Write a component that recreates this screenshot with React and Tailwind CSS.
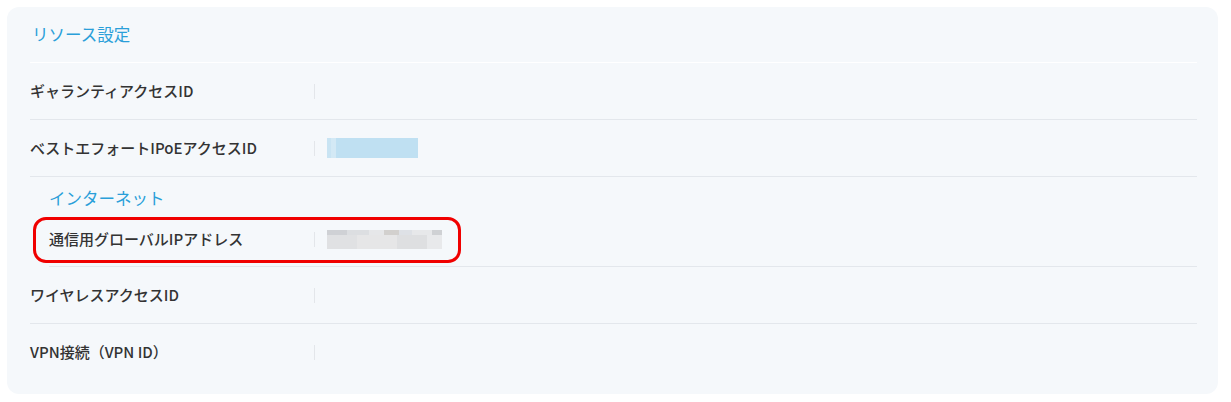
import React from "react";

const font = { fontFamily: '"Noto Sans CJK JP", "Noto Sans", sans-serif' };

function Row({ label, children, last }) {
    return (
        <div className={`flex items-center h-[57px] ${last ? "" : "border-b border-[#e3e7ec]"}`}>
            <div className="flex-1 text-[15px] font-medium text-[#333]">{label}</div>
            <div className="w-[1px] h-[15px] bg-[#e3e6ea]" />
            <div className="w-[882px] pl-[12px] flex items-center">{children}</div>
        </div>
    );
}

export default function App() {
    return (
        <div className="w-[1231px] h-[402px] bg-white pt-[7px] pl-[7px]" style={font}>
            <div className="w-[1211px] h-[387px] bg-[#f5f8fb] rounded-[12px] pl-[23px] pr-[21px]">
                {/* Title */}
                <div className="h-[56px] flex items-center border-b border-white pl-[2px]">
                    <h2 className="text-[16.5px] text-[#2a9fd9]">リソース設定</h2>
                </div>

                <Row label="ギャランティアクセスID" />
                <Row label="ベストエフォートIPoEアクセスID">
                    <div className="w-[91px] h-[20px] bg-[#bfe0f2] flex">
                        <div className="w-[4px] bg-[#c9e4f3]" />
                        <div className="w-[5px] bg-[#d3e9f5]" />
                    </div>
                </Row>

                {/* Internet subsection */}
                <div className="pl-[19px]">
                    <div className="h-[40px] flex items-center pt-[3px]">
                        <h3 className="text-[16.5px] text-[#2a9fd9]">インターネット</h3>
                    </div>
                    <div className="relative">
                        <div className="flex items-center h-[50px] border-b border-[#e3e7ec] pb-[4px]">
                            <div className="flex-1 text-[15px] font-medium text-[#333]">通信用グローバルIPアドレス</div>
                            <div className="w-[1px] h-[15px] bg-[#e3e6ea]" />
                            <div className="w-[882px] pl-[12px] flex items-center">
                                <div className="w-[115px] h-[19px] bg-[#e3e4e6] flex flex-col">
                                    <div className="h-[5px] flex">
                                        <div className="w-[20px] bg-[#cfd1d5]" />
                                        <div className="w-[22px] bg-[#dcdee1]" />
                                        <div className="w-[15px] bg-[#e6e7e9]" />
                                        <div className="w-[15px] bg-[#d2d0ce]" />
                                        <div className="w-[13px] bg-[#dee1e6]" />
                                        <div className="w-[20px] bg-[#e7e8ea]" />
                                        <div className="w-[10px] bg-[#cfd1d4]" />
                                    </div>
                                    <div className="flex-1 flex">
                                        <div className="w-[30px] bg-[#e0e1e3]" />
                                        <div className="w-[40px] bg-[#e6e6e7]" />
                                        <div className="w-[30px] bg-[#dedfe1]" />
                                        <div className="w-[15px] bg-[#e8e9eb]" />
                                    </div>
                                </div>
                            </div>
                        </div>
                        <div className="absolute left-[-16px] top-0 w-[428px] h-[46px] border-[3px] border-[#f00000] rounded-[13px]" />
                    </div>
                </div>

                <Row label="ワイヤレスアクセスID" />
                <Row label="VPN接続（VPN ID）" last />
            </div>
        </div>
    );
}
